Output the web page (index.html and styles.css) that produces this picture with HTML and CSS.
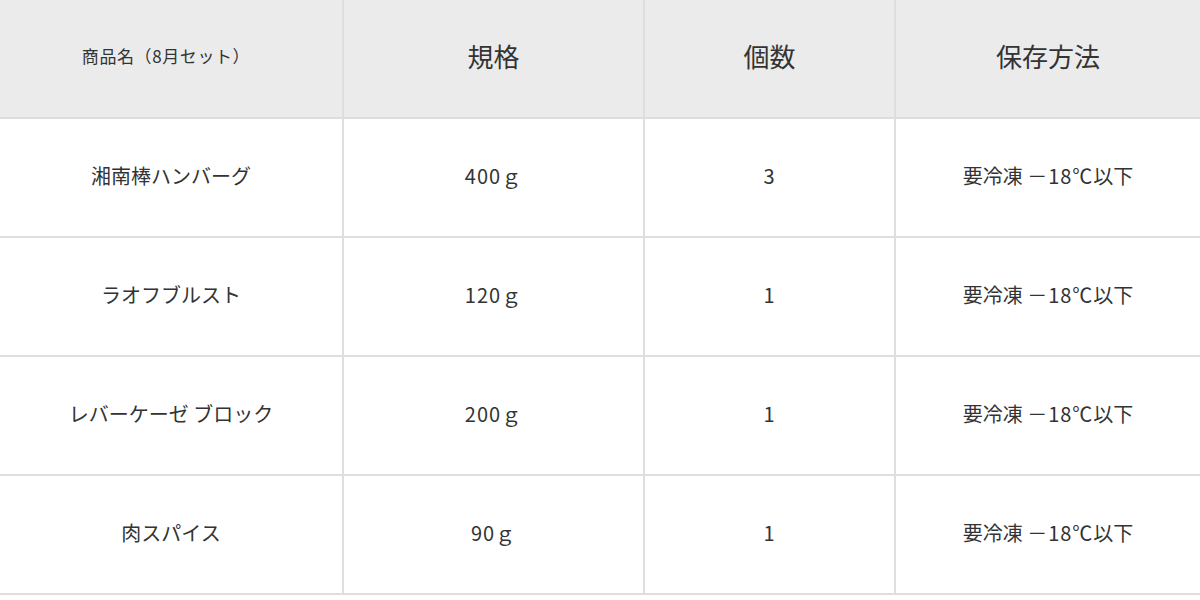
FILE: index.html
```html
<!DOCTYPE html>
<html lang="ja">
<head>
<meta charset="utf-8">
<title>商品一覧</title>
<link rel="stylesheet" href="styles.css">
</head>
<body>
<table class="spec">
  <colgroup>
    <col class="c1"><col class="c2"><col class="c3"><col class="c4">
  </colgroup>
  <thead>
    <tr>
      <th class="small">商品名（8月セット）</th>
      <th>規格</th>
      <th>個数</th>
      <th>保存方法</th>
    </tr>
  </thead>
  <tbody>
    <tr><td>湘南棒ハンバーグ</td><td class="num">400ｇ</td><td class="num">3</td><td>要冷凍 <span class="num">－18℃</span>以下</td></tr>
    <tr><td>ラオフブルスト</td><td class="num">120ｇ</td><td class="num">1</td><td>要冷凍 <span class="num">－18℃</span>以下</td></tr>
    <tr><td>レバーケーゼ ブロック</td><td class="num">200ｇ</td><td class="num">1</td><td>要冷凍 <span class="num">－18℃</span>以下</td></tr>
    <tr><td>肉スパイス</td><td class="num">90ｇ</td><td class="num">1</td><td>要冷凍 <span class="num">－18℃</span>以下</td></tr>
  </tbody>
</table>
</body>
</html>
```
FILE: styles.css
```css
html, body {
  margin: 0;
  padding: 0;
  background: #ffffff;
}
body {
  font-family: "Noto Sans CJK JP", "Noto Sans", sans-serif;
  color: #333333;
}
.spec {
  width: 1200px;
  border-collapse: separate;
  border-spacing: 0;
  table-layout: fixed;
}
.c1 { width: 344px; }
.c2 { width: 301px; }
.c3 { width: 251px; }
.c4 { width: 304px; }
.spec th,
.spec td {
  height: 119px;
  box-sizing: border-box;
  padding: 0 0 3px 0;
  text-align: center;
  vertical-align: middle;
  border-bottom: 2px solid #dedede;
  border-right: 2px solid #dedede;
  font-weight: normal;
  line-height: 1.2;
}
.spec th:last-child,
.spec td:last-child {
  border-right: none;
}
.spec th {
  background: #ebebeb;
  font-size: 26px;
  padding-bottom: 5px;
}
.spec th.small {
  font-size: 17px;
  letter-spacing: 0.6px;
  padding-right: 10px;
}
.spec td {
  font-size: 20px;
}
.num {
  letter-spacing: 1px;
}
```
